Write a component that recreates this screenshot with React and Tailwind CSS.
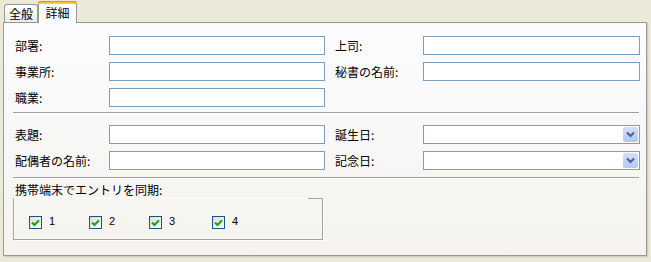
const font = { fontFamily: '"Noto Sans CJK JP", "Liberation Sans", sans-serif' };

function TextBox({ combo }) {
  return (
    <div className="relative h-[19px] w-full border border-[#7F9DB9] bg-white">
      {combo && (
        <div className="absolute right-[1px] top-[1px] flex h-[15px] w-[15px] items-center justify-center rounded-[2px] bg-gradient-to-b from-[#D2DEFB] to-[#B2C7F5]">
          <svg width="9" height="7" viewBox="0 0 9 7">
            <path d="M1 1.5 L4.5 5 L8 1.5" fill="none" stroke="#4D6185" strokeWidth="2" />
          </svg>
        </div>
      )}
    </div>
  );
}

function Field({ label, combo }) {
  return (
    <div className="flex items-center">
      <div className="w-[94px] shrink-0 text-[12px] leading-none text-black">{label}</div>
      <TextBox combo={combo} />
    </div>
  );
}

function RightField({ label, combo }) {
  return (
    <div className="flex items-center">
      <div className="w-[88px] shrink-0 text-[12px] leading-none text-black">{label}</div>
      <TextBox combo={combo} />
    </div>
  );
}

function Check({ n }) {
  return (
    <div className="flex items-center gap-[7px]">
      <div className="flex h-[13px] w-[13px] items-center justify-center border border-[#1C5180] bg-gradient-to-br from-[#DCDCD7] to-white">
        <svg width="9" height="8" viewBox="0 0 9 8">
          <path d="M1 3.5 L3.5 6 L8 1.2" fill="none" stroke="#21A121" strokeWidth="2.2" />
        </svg>
      </div>
      <span className="-mt-[3px] text-[11px] leading-none text-black" style={{ fontFamily: '"Liberation Sans", sans-serif' }}>{n}</span>
    </div>
  );
}

function Separator() {
  return <div className="ml-[9px] w-[626px] border-t border-b border-t-[#A0A0A0] border-b-white" />;
}

export default function App() {
  return (
    <div className="h-[262px] w-[651px] bg-[#ECE9D8] pl-[3px]" style={font}>
      <div className="flex h-[22px] items-end">
        <div className="ml-[1px] flex h-[18px] w-[34px] items-center justify-center rounded-t-[3px] border border-b-0 border-[#919B9C] bg-gradient-to-b from-white to-[#ECEBE6] text-[12px] leading-none">
          全般
        </div>
        <div className="relative z-10 -mb-[1px] flex h-[22px] w-[39px] flex-col rounded-t-[3px] border border-b-0 border-[#919B9C] bg-[#FCFCFE]">
          <div className="-mx-[1px] -mt-[1px] h-[3px] rounded-t-[3px] bg-[#FFC83C] border-t border-[#E68B2C]" />
          <div className="flex flex-1 items-center justify-center pb-[1px] text-[12px] leading-none">詳細</div>
        </div>
      </div>
      <div className="h-[234px] w-[644px] border border-[#919B9C] bg-gradient-to-b from-[#FCFCFE] to-[#F4F3EE] shadow-[1px_1px_0_#D0CEBF,2px_2px_0_#E3E0D0]">
        <div className="grid grid-cols-[310px_305px] gap-x-[10px] pl-[11px] pt-[13px]">
          <div className="flex flex-col gap-[7px]">
            <Field label="部署:" />
            <Field label="事業所:" />
            <Field label="職業:" />
          </div>
          <div className="flex flex-col gap-[7px]">
            <RightField label="上司:" />
            <RightField label="秘書の名前:" />
          </div>
        </div>
        <div className="mt-[5px]">
          <Separator />
        </div>
        <div className="mt-[11px] grid grid-cols-[310px_305px] gap-x-[10px] pl-[11px]">
          <div className="flex flex-col gap-[7px]">
            <Field label="表題:" />
            <Field label="配偶者の名前:" />
          </div>
          <div className="flex flex-col gap-[7px]">
            <RightField label="誕生日:" combo />
            <RightField label="記念日:" combo />
          </div>
        </div>
        <div className="mt-[7px]">
          <Separator />
        </div>
        <div className="ml-[11px] mt-[5px] text-[12px] leading-none">携帯端末でエントリを同期:</div>
        <div className="ml-[9px] mt-[2px] w-[310px]">
          <div className="flex h-[42px] flex-col border-x border-b border-[#A5A597] shadow-[inset_1px_0_0_white,1px_1px_0_white]">
            <div className="flex">
              <div className="flex-1 border-t border-white" />
              <div className="w-[14px] border-t border-[#A5A597]" />
            </div>
            <div className="flex pl-[15px] pt-[17px]">
              <div className="w-[60px]"><Check n="1" /></div>
              <div className="w-[60px]"><Check n="2" /></div>
              <div className="w-[63px]"><Check n="3" /></div>
              <div className="w-[60px]"><Check n="4" /></div>
            </div>
          </div>
        </div>
      </div>
    </div>
  );
}
